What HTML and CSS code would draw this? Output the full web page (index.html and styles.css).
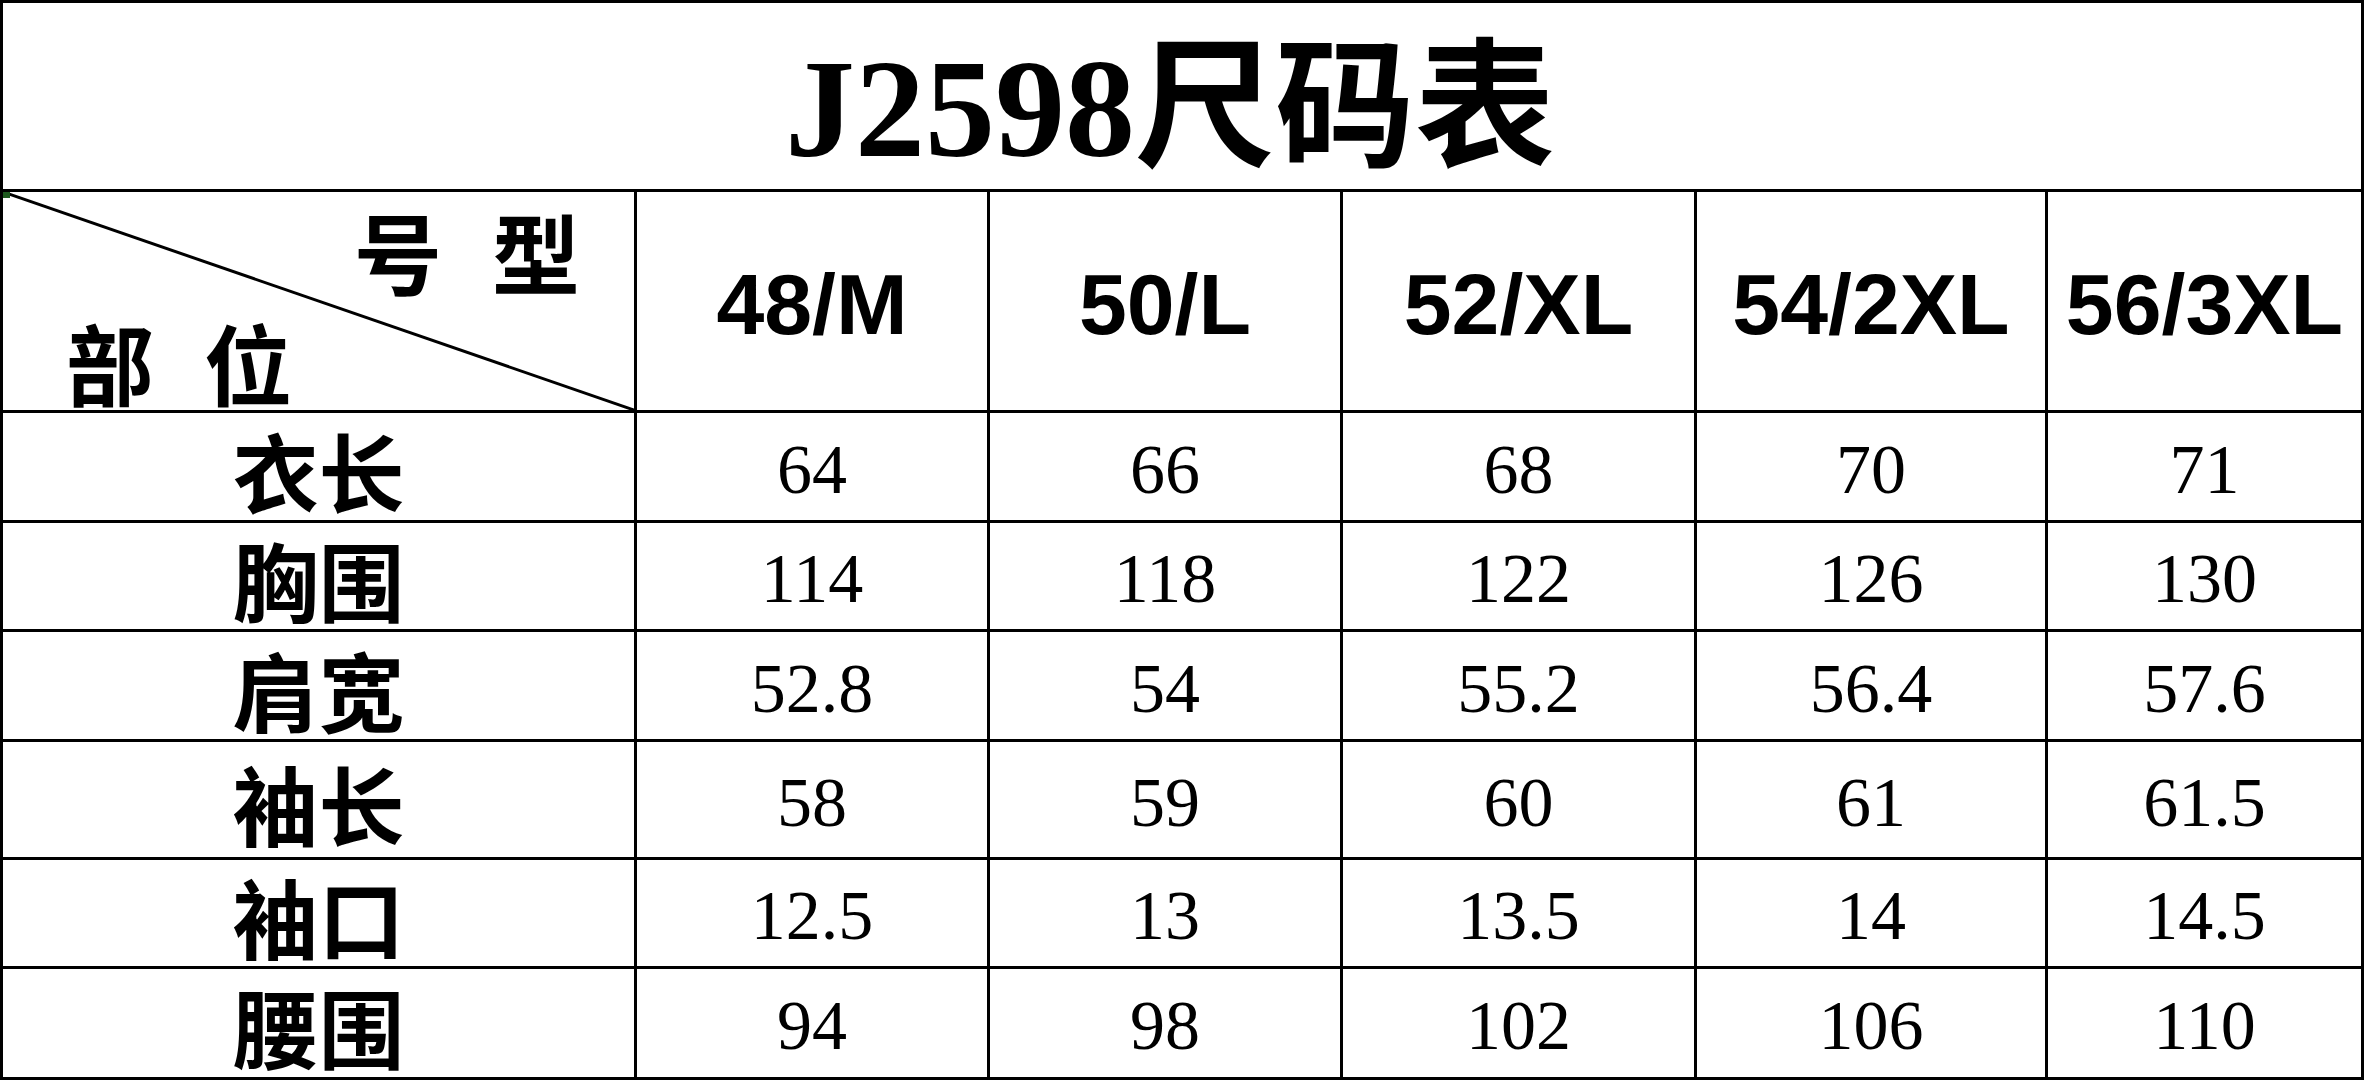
FILE: index.html
```html
<!DOCTYPE html>
<html lang="zh">
<head>
<meta charset="utf-8">
<title>J2598尺码表</title>
<link rel="stylesheet" href="styles.css">
</head>
<body>
<div class="sheet">
  <div class="cell title">J2598尺码表</div>

  <div class="cell corner">
    <svg class="diag" viewBox="0 0 100 100" preserveAspectRatio="none" aria-hidden="true">
      <line x1="0" y1="0" x2="100" y2="100" stroke="#000" stroke-width="3" vector-effect="non-scaling-stroke"/>
    </svg>
    <span class="mark"></span>
    <div class="corner-top"><span>号</span><span>型</span></div>
    <div class="corner-bottom"><span>部</span><span>位</span></div>
  </div>
  <div class="cell size">48/M</div>
  <div class="cell size">50/L</div>
  <div class="cell size">52/XL</div>
  <div class="cell size">54/2XL</div>
  <div class="cell size">56/3XL</div>

  <div class="cell label">衣长</div>
  <div class="cell num">64</div>
  <div class="cell num">66</div>
  <div class="cell num">68</div>
  <div class="cell num">70</div>
  <div class="cell num">71</div>

  <div class="cell label">胸围</div>
  <div class="cell num">114</div>
  <div class="cell num">118</div>
  <div class="cell num">122</div>
  <div class="cell num">126</div>
  <div class="cell num">130</div>

  <div class="cell label">肩宽</div>
  <div class="cell num">52.8</div>
  <div class="cell num">54</div>
  <div class="cell num">55.2</div>
  <div class="cell num">56.4</div>
  <div class="cell num">57.6</div>

  <div class="cell label">袖长</div>
  <div class="cell num">58</div>
  <div class="cell num">59</div>
  <div class="cell num">60</div>
  <div class="cell num">61</div>
  <div class="cell num">61.5</div>

  <div class="cell label">袖口</div>
  <div class="cell num">12.5</div>
  <div class="cell num">13</div>
  <div class="cell num">13.5</div>
  <div class="cell num">14</div>
  <div class="cell num">14.5</div>

  <div class="cell label">腰围</div>
  <div class="cell num">94</div>
  <div class="cell num">98</div>
  <div class="cell num">102</div>
  <div class="cell num">106</div>
  <div class="cell num">110</div>
</div>
</body>
</html>
```

FILE: styles.css
```css
html, body {
  margin: 0;
  padding: 0;
  background: #fff;
}

.sheet {
  width: 2364px;
  height: 1080px;
  box-sizing: border-box;
  padding: 3px;
  background: #000;
  display: grid;
  grid-template-columns: 631px 350px 350px 351px 348px 313px;
  grid-template-rows: 186px 218px 107px 106px 107px 115px 106px 108px;
  gap: 3px;
}

.cell {
  background: #fff;
  color: #000;
  display: flex;
  align-items: center;
  justify-content: center;
  box-sizing: border-box;
  min-width: 0;
  min-height: 0;
}

.title {
  grid-column: 1 / -1;
  font-family: "Liberation Serif", "Noto Sans CJK SC", serif;
  font-weight: 700;
  font-size: 140px;
  line-height: 1;
  padding-top: 26px;
  padding-right: 24px;
}

.corner {
  position: relative;
  flex-direction: column;
  align-items: stretch;
  justify-content: space-between;
  padding: 14px 54px 5px 63px;
  font-family: "Noto Sans CJK SC", sans-serif;
  font-weight: 700;
  font-size: 88px;
  line-height: 1;
}

.diag {
  position: absolute;
  left: 0;
  top: 0;
  width: 100%;
  height: 100%;
}

.mark {
  position: absolute;
  left: 0;
  top: 0;
  width: 7px;
  height: 6px;
  background: #1f5a1f;
}

.corner-top,
.corner-bottom {
  display: flex;
  gap: 50px;
  position: relative;
}

.corner-top {
  justify-content: flex-end;
}

.corner-bottom {
  justify-content: flex-start;
}

.size {
  font-family: "Liberation Sans", Arial, sans-serif;
  font-weight: 700;
  font-size: 86px;
  line-height: 1;
  padding-top: 6px;
}

.label {
  font-family: "Noto Sans CJK SC", sans-serif;
  font-weight: 700;
  font-size: 86px;
  line-height: 1;
  padding-top: 6px;
}

.num {
  font-family: "Liberation Serif", "Times New Roman", serif;
  font-weight: 400;
  font-size: 70px;
  line-height: 1;
  padding-top: 6px;
}
```
